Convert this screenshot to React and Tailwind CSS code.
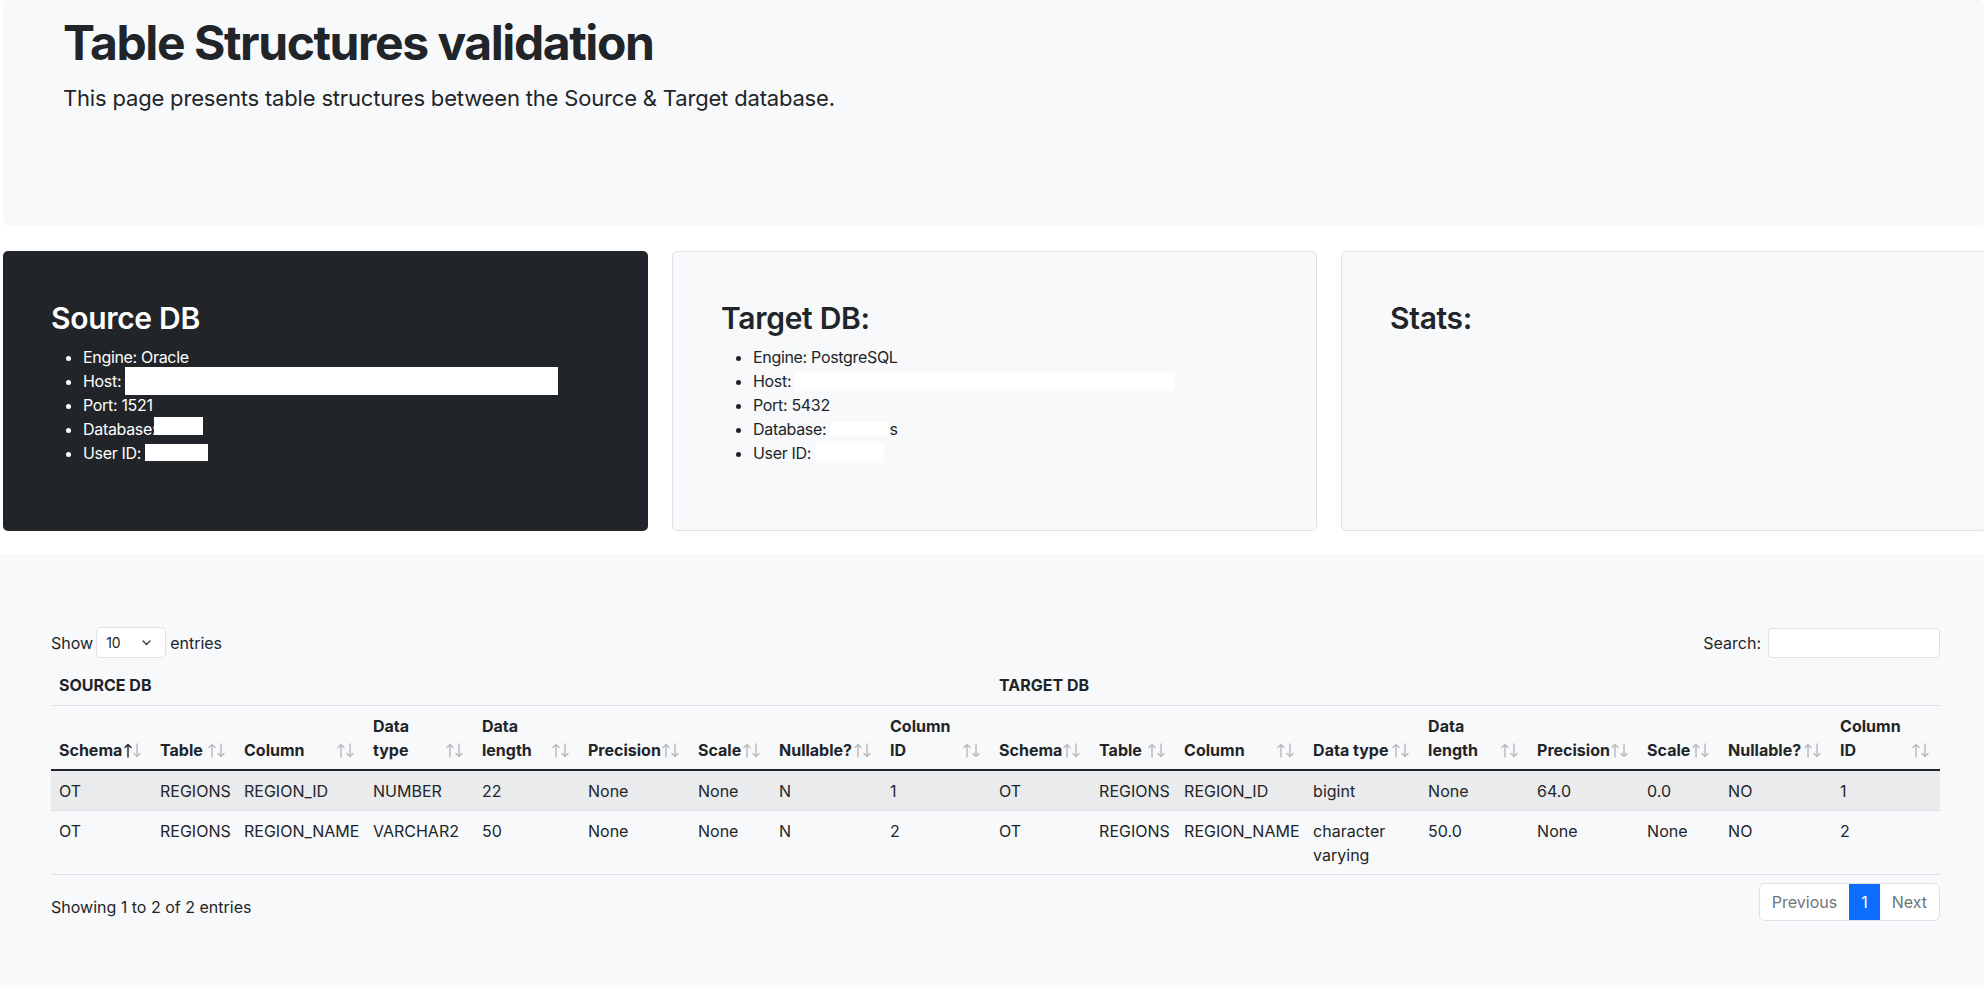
import React from 'react';

const COLS = [
  { w: 'w-[101px]', label: ['Schema'], active: true },
  { w: 'w-[84px]', label: ['Table'] },
  { w: 'w-[129px]', label: ['Column'] },
  { w: 'w-[109px]', label: ['Data', 'type'] },
  { w: 'w-[106px]', label: ['Data', 'length'] },
  { w: 'w-[110px]', label: ['Precision'] },
  { w: 'w-[81px]', label: ['Scale'] },
  { w: 'w-[111px]', label: ['Nullable?'] },
  { w: 'w-[109px]', label: ['Column', 'ID'] },
  { w: 'w-[100px]', label: ['Schema'] },
  { w: 'w-[85px]', label: ['Table'] },
  { w: 'w-[129px]', label: ['Column'] },
  { w: 'w-[115px]', label: ['Data type'] },
  { w: 'w-[109px]', label: ['Data', 'length'] },
  { w: 'w-[110px]', label: ['Precision'] },
  { w: 'w-[81px]', label: ['Scale'] },
  { w: 'w-[112px]', label: ['Nullable?'] },
  { w: 'w-[108px]', label: ['Column', 'ID'] },
];

const ROWS = [
  ['OT', 'REGIONS', 'REGION_ID', 'NUMBER', '22', 'None', 'None', 'N', '1', 'OT', 'REGIONS', 'REGION_ID', 'bigint', 'None', '64.0', '0.0', 'NO', '1'],
  ['OT', 'REGIONS', 'REGION_NAME', 'VARCHAR2', '50', 'None', 'None', 'N', '2', 'OT', 'REGIONS', 'REGION_NAME', 'character varying', '50.0', 'None', 'None', 'NO', '2'],
];

const SortIcon = ({ active }) => (
  <svg width="18" height="15" viewBox="0 0 18 15" fill="none" strokeWidth="1.4" strokeLinecap="round" strokeLinejoin="round">
    <path d="M4 14V1.5M1 4.5 4 1.5 7 4.5" stroke={active ? '#212529' : '#b7b9bc'} />
    <path d="M13 1v12.5M10 10.5l3 3 3-3" stroke="#b7b9bc" />
  </svg>
);

const Redact = ({ className }) => <span className={`inline-block bg-white ${className}`} />;

export default function App() {
  return (
    <div className="h-screen overflow-hidden bg-white flex flex-col font-['Inter',sans-serif] text-[#212529]">
      {/* Header */}
      <header className="ml-[3px] h-[226px] shrink-0 bg-[#f8f9fa] rounded-md pl-[60px] pt-[14px]">
        <h1 className="text-[48px] font-bold leading-[58px] tracking-[-0.03em]">Table Structures validation</h1>
        <p className="mt-[10px] text-[22px] leading-[33px] tracking-[-0.008em]">
          This page presents table structures between the Source &amp; Target database.
        </p>
      </header>

      {/* DB cards */}
      <div className="mt-[25px] flex gap-[24px] pl-[3px] shrink-0">
        <div className="w-[645px] h-[280px] shrink-0 rounded-[5px] bg-[#212529] text-white px-12 pt-[49px]">
          <h2 className="text-[30px] font-semibold leading-[36px] tracking-[-0.01em] mb-[9px]">Source DB</h2>
          <ul className="list-disc pl-8 text-[16px] leading-6 tracking-[-0.02em]">
            <li>Engine: Oracle</li>
            <li>Host: <Redact className="w-[433px] h-[28px] -my-[2px] align-[-6px]" /></li>
            <li>Port: 1521</li>
            <li>Database:<Redact className="-ml-[2px] w-[49px] h-[18px] align-baseline" /></li>
            <li>User ID: <Redact className="w-[63px] h-[17px] align-[-2px]" /></li>
          </ul>
        </div>

        <div className="w-[645px] h-[280px] shrink-0 rounded-[5px] bg-[#f8f9fa] border border-[#dee2e6] px-12 pt-[48px]">
          <h2 className="text-[30px] font-semibold leading-[36px] tracking-[-0.01em] mb-[9px]">Target DB:</h2>
          <ul className="list-disc pl-8 text-[16px] leading-6 tracking-[-0.02em]">
            <li>Engine: PostgreSQL</li>
            <li>Host: <Redact className="w-[380px] h-[19px] align-[-4px]" /></li>
            <li>Port: 5432</li>
            <li>Database: <Redact className="w-[59px] h-[14px] align-[-1px]" />s</li>
            <li>User ID: <Redact className="w-[69px] h-[20px] align-[-4px]" /></li>
          </ul>
        </div>

        <div className="w-[645px] h-[280px] shrink-0 rounded-[5px] bg-[#f8f9fa] border border-[#dee2e6] px-12 pt-[48px]">
          <h2 className="text-[30px] font-semibold leading-[36px] tracking-[-0.01em]">Stats:</h2>
        </div>
      </div>

      {/* Table section */}
      <section className="mt-[23px] flex-1 bg-[#f8f9fa] pl-[51px] pr-[44px] pt-[73px] text-[16px] leading-6">
        <div className="flex items-center justify-between h-[31px]">
          <div className="flex items-center">
            <span>Show</span>
            <div className="ml-[3px] w-[70px] h-[31px] bg-white border border-[#dee2e6] rounded-[5px] flex items-center justify-between pl-[9px] pr-[14px] text-[14px]">
              <span>10</span>
              <svg width="9" height="6" viewBox="0 0 9 6" fill="none" stroke="#343a40" strokeWidth="1.4" strokeLinecap="round" strokeLinejoin="round">
                <path d="M1 1l3.5 3.5L8 1" />
              </svg>
            </div>
            <span className="ml-[4px]">entries</span>
          </div>
          <div className="flex items-center">
            <span>Search:</span>
            <div className="ml-[7px] w-[172px] h-[30px] bg-white border border-[#dee2e6] rounded-[4px]" />
          </div>
        </div>

        <table className="mt-[7px] table-fixed border-collapse w-[1889px]">
          <colgroup>
            {COLS.map((c, i) => (
              <col key={i} className={c.w} />
            ))}
          </colgroup>
          <thead>
            <tr>
              <th colSpan={9} className="text-left font-bold px-2 py-2 border-b border-[#dee2e6]">SOURCE DB</th>
              <th colSpan={9} className="text-left font-bold px-2 py-2 border-b border-[#dee2e6]">TARGET DB</th>
            </tr>
            <tr>
              {COLS.map((c, i) => (
                <th key={i} className="relative text-left font-bold align-bottom whitespace-nowrap px-2 pt-2 pb-[7px] border-b-2 border-[#212529]">
                  {c.label.map((l, j) => (
                    <div key={j}>{l}</div>
                  ))}
                  <span className="absolute right-[10px] bottom-[11px] flex">
                    <SortIcon active={c.active} />
                  </span>
                </th>
              ))}
            </tr>
          </thead>
          <tbody>
            {ROWS.map((r, i) => (
              <tr key={i} className={i === 0 ? 'bg-[#eaebec]' : ''}>
                {r.map((v, j) => (
                  <td key={j} className={`align-top px-2 pt-2 pb-[7px] border-b border-[#dee2e6] ${j === 12 ? 'whitespace-normal' : 'whitespace-nowrap'}`}>
                    {v}
                  </td>
                ))}
              </tr>
            ))}
          </tbody>
        </table>

        <div className="mt-[8px] flex justify-between items-start">
          <div className="pt-[12px]">Showing 1 to 2 of 2 entries</div>
          <div className="flex h-[38px] border border-[#dee2e6] rounded-[6px] overflow-hidden bg-white text-[#6c757d]">
            <span className="px-3 flex items-center">Previous</span>
            <span className="px-3 flex items-center bg-[#0d6efd] text-white">1</span>
            <span className="px-3 flex items-center">Next</span>
          </div>
        </div>
      </section>
    </div>
  );
}
